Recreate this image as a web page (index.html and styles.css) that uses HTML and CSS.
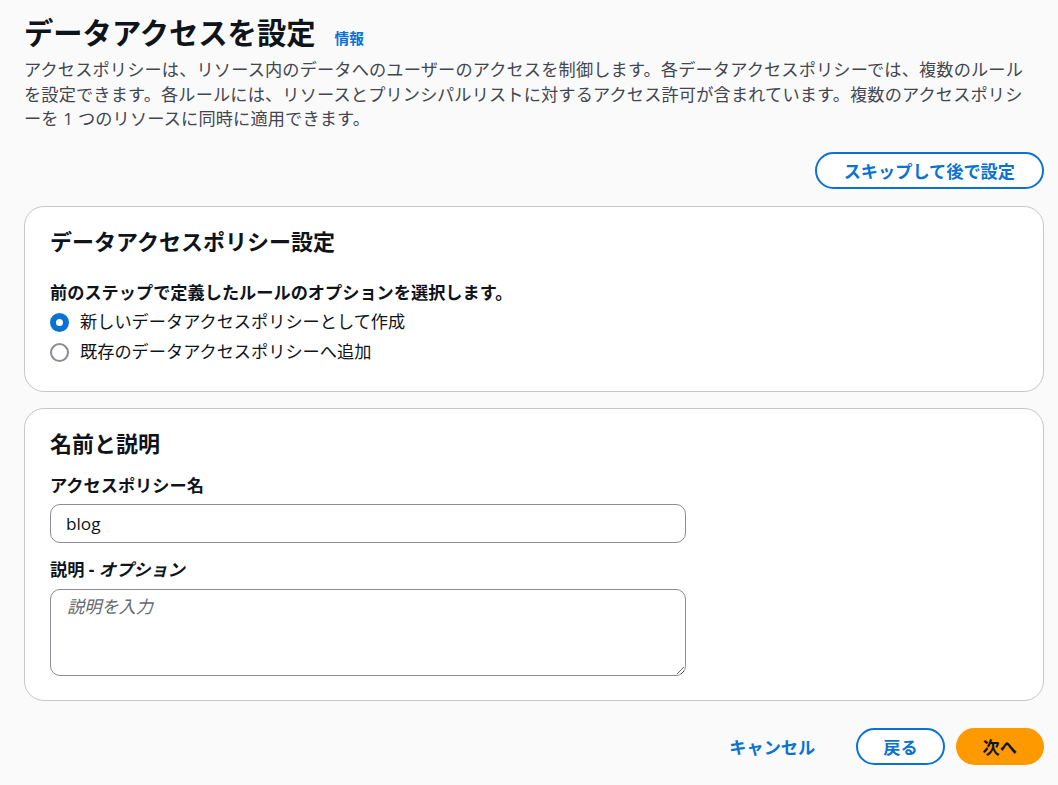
FILE: index.html
```html
<!DOCTYPE html>
<html lang="ja">
<head>
    <meta charset="UTF-8">
    <title>データアクセスを設定</title>
    <link rel="stylesheet" href="styles.css">
</head>
<body>
    <div class="page">
        <!-- ヘッダー -->
        <div class="header">
            <div class="title-row">
                <h1>データアクセスを設定</h1>
                <a href="#" class="info-link">情報</a>
            </div>
            <p class="description">アクセスポリシーは、リソース内のデータへのユーザーのアクセスを制御します。各データアクセスポリシーでは、複数のルールを設定できます。各ルールには、リソースとプリンシパルリストに対するアクセス許可が含まれています。複数のアクセスポリシーを 1 つのリソースに同時に適用できます。</p>
        </div>

        <div class="actions-top">
            <button class="btn btn-normal btn-wide">スキップして後で設定</button>
        </div>

        <!-- ポリシー設定 -->
        <div class="card card-options">
            <h2>データアクセスポリシー設定</h2>
            <div class="field-label field-label-gap">前のステップで定義したルールのオプションを選択します。</div>
            <div class="radio-group">
                <label class="radio">
                    <span class="radio-circle checked"></span>
                    <span>新しいデータアクセスポリシーとして作成</span>
                </label>
                <label class="radio">
                    <span class="radio-circle"></span>
                    <span>既存のデータアクセスポリシーへ追加</span>
                </label>
            </div>
        </div>

        <!-- 名前と説明 -->
        <div class="card card-form">
            <h2>名前と説明</h2>
            <div class="field">
                <div class="field-label">アクセスポリシー名</div>
                <input class="text-input" type="text" value="blog">
            </div>
            <div class="field">
                <div class="field-label">説明 - <i>オプション</i></div>
                <textarea class="text-area" placeholder="説明を入力"></textarea>
            </div>
        </div>

        <div class="actions-bottom">
            <button class="btn btn-link">キャンセル</button>
            <button class="btn btn-normal">戻る</button>
            <button class="btn btn-primary">次へ</button>
        </div>
    </div>
</body>
</html>
```

FILE: styles.css
```css
* {
    margin: 0;
    padding: 0;
    box-sizing: border-box;
}
body {
    font-family: 'Open Sans', 'Noto Sans CJK JP', sans-serif;
    background: #fafafa;
    color: #0f141a;
    font-size: 17.2px;
    line-height: 24.5px;
}
.page {
    width: 1044px;
    padding: 15px 0 0 24px;
}
.title-row {
    display: flex;
    align-items: baseline;
    gap: 19px;
}
h1 {
    font-size: 29.3px;
    line-height: 36px;
    font-weight: 700;
}
.info-link {
    font-size: 14.7px;
    font-weight: 700;
    color: #0972d3;
    text-decoration: none;
}
.description {
    margin-top: 7px;
    max-width: 1008px;
    letter-spacing: 0.15px;
    line-break: normal;
    color: #424650;
}
.actions-top {
    display: flex;
    justify-content: flex-end;
    margin-top: 20px;
}
.btn {
    height: 37px;
    display: inline-flex;
    align-items: center;
    padding: 0 25px;
    border-radius: 20px;
    font-family: inherit;
    font-size: 17.2px;
    font-weight: 700;
    cursor: pointer;
    border: 2px solid transparent;
    background: none;
}
.btn-wide {
    padding: 0 27px;
}
.btn-normal {
    background: #fff;
    border-color: #0972d3;
    color: #0972d3;
}
.btn-primary {
    background: #ff9900;
    border-color: #ff9900;
    color: #0f141a;
}
.btn-link {
    color: #0972d3;
    padding: 0 28px;
}
.card {
    margin-top: 17px;
    background: #fff;
    border: 1px solid #c6c6cd;
    border-radius: 20px;
    padding: 20px 25px 22px;
}
.card + .card {
    margin-top: 16px;
}
.card h2 {
    font-size: 22px;
    line-height: 29px;
    font-weight: 700;
}
.card-options {
    padding-bottom: 23px;
}
.field-label {
    font-weight: 700;
    line-height: 24px;
}
.field-label i {
    font-style: italic;
}
.field-label-gap {
    margin-top: 25px;
}
.radio-group {
    margin-top: 3px;
}
.radio {
    display: flex;
    align-items: center;
    gap: 11px;
    height: 30px;
    cursor: pointer;
}
.radio-circle {
    width: 19px;
    height: 19px;
    border-radius: 50%;
    border: 2px solid #8c8c94;
    background: #fff;
}
.radio-circle.checked {
    border: 6px solid #0972d3;
}
.card-form {
    padding-bottom: 24px;
}
.field {
    margin-top: 16px;
}
.field + .field {
    margin-top: 15px;
}
.text-input,
.text-area {
    display: block;
    width: 636px;
    margin-top: 6px;
    border: 1px solid #8c8c94;
    border-radius: 10px;
    background: #fff;
    font-family: inherit;
    font-size: 17.2px;
    color: #0f141a;
    padding: 0 15px;
    outline: none;
}
.text-input {
    height: 39px;
}
.text-area {
    height: 87px;
    margin-top: 7px;
    padding: 5px 16px;
    resize: vertical;
    line-height: 24px;
}
.text-area::placeholder {
    color: #656871;
    font-style: italic;
}
.actions-bottom {
    display: flex;
    justify-content: flex-end;
    gap: 11px;
    margin-top: 27px;
}
```
